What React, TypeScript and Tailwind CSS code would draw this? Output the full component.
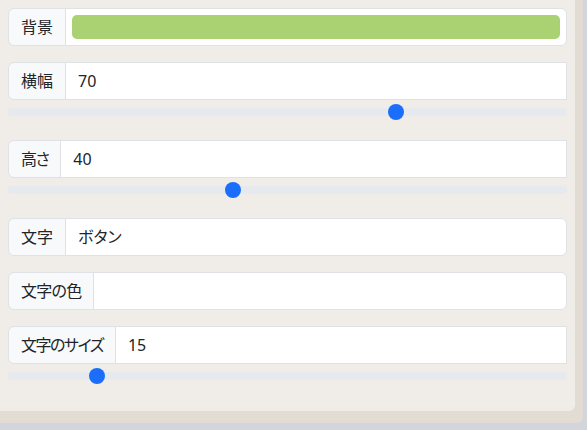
import { ReactNode } from "react";

type GroupProps = {
    label: string
    children?: ReactNode
    slider?: boolean
    tight?: string
}

function InputGroup({ label, children, slider, tight = "" }: GroupProps) {
    return (
        <div className="flex h-[38px] w-full">
            <span className={"flex items-center whitespace-nowrap rounded-l-md border border-[#dee2e6] bg-[#f8f9fa] px-3 text-base leading-6 text-[#212529] " + tight}>
                {label}
            </span>
            <div className={"-ml-px flex flex-1 items-center border border-[#dee2e6] bg-white px-3 text-base text-[#212529] " + (slider ? "" : "rounded-r-md")}>
                {children}
            </div>
        </div>
    )
}

function Range({ value }: { value: number }) {
    return (
        <div className="relative flex h-6 w-full items-center">
            <div className="h-2 w-full rounded-full bg-[#e6e9ed]" />
            <div
                className="absolute top-1/2 h-4 w-4 -translate-y-1/2 rounded-full bg-[#1a6efa]"
                style={{ left: `calc(${value / 100} * (100% - 16px))` }}
            />
        </div>
    )
}

export default function App() {
    return (
        <div className="h-[430px] w-[587px] bg-[#d2d6dc] font-['Noto_Sans','Noto_Sans_CJK_JP',sans-serif] [font-feature-settings:'palt']">
            <div className="h-[423px] w-[583px] rounded-br-md bg-[#e3dcd5]">
                <div className="flex h-[411px] w-[575px] flex-col rounded-br-md bg-[#f0ece7] px-2 pt-2">
                    <div className="mb-4">
                        <div className="flex h-[38px] w-full">
                            <span className="flex items-center rounded-l-md border border-[#dee2e6] bg-[#f8f9fa] px-3 text-base text-[#212529]">背景</span>
                            <div className="-ml-px flex flex-1 items-center rounded-r-md border border-[#dee2e6] bg-white px-1.5">
                                <div className="h-6 w-full rounded-[5px] bg-[#aad273]" />
                            </div>
                        </div>
                    </div>
                    <div className="mb-4">
                        <InputGroup label="横幅" slider>70</InputGroup>
                        <Range value={70} />
                    </div>
                    <div className="mb-4">
                        <InputGroup label="高さ" slider tight="tracking-[-1.5px]">40</InputGroup>
                        <Range value={40} />
                    </div>
                    <div className="mb-4">
                        <InputGroup label="文字">ボタン</InputGroup>
                    </div>
                    <div className="mb-4">
                        <InputGroup label="文字の色" tight="tracking-[-0.75px]" />
                    </div>
                    <div>
                        <InputGroup label="文字のサイズ" slider tight="tracking-[-1.5px]">15</InputGroup>
                        <Range value={15} />
                    </div>
                </div>
            </div>
        </div>
    )
}
